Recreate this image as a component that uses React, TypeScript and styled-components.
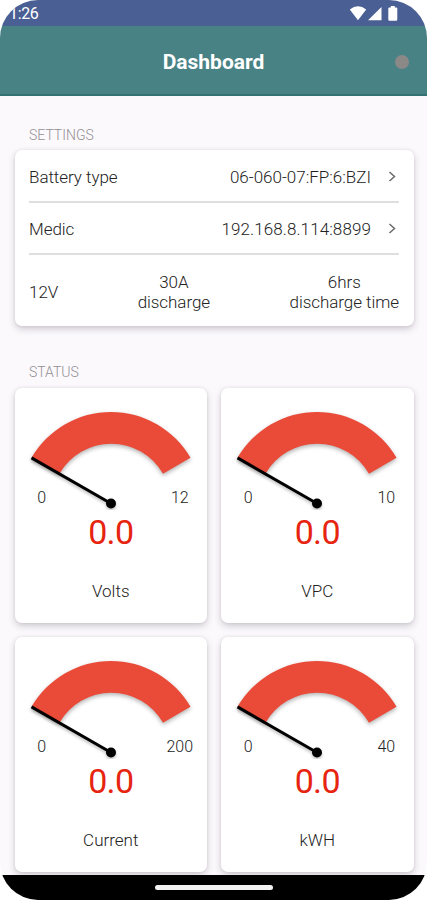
import React from "react";
import styled, { createGlobalStyle } from "styled-components";

const GlobalStyle = createGlobalStyle`
  * { box-sizing: border-box; }
  body { margin: 0; background: #fff; overflow: hidden; }
`;

const Screen = styled.div`
  width: 427px;
  height: 900px;
  display: flex;
  flex-direction: column;
  overflow: hidden;
  border-radius: 38px;
  background: #fcf9fd;
  color: #222;
  font: 300 17px/20px Roboto, sans-serif;
`;

const StatusBar = styled.div`
  height: 26px;
  flex: none;
  display: flex;
  justify-content: space-between;
  padding: 0 28px 0 9px;
  background: #4a5f93;
  color: #fff;
`;

const Clock = styled.time`
  margin-top: 4px;
  font-size: 16px;
  font-weight: 400;
  line-height: 20px;
  letter-spacing: -0.35px;
`;

const SystemIcons = styled.svg`
  width: 50px;
  height: 26px;
`;

const Header = styled.header`
  height: 70px;
  flex: none;
  display: grid;
  grid-template-columns: 1fr auto 1fr;
  align-items: center;
  padding: 3px 18px 0;
  background: #488284;
  border-bottom: 2px solid #327270;
`;

const Title = styled.h1`
  grid-column: 2;
  margin: 0;
  color: #fff;
  font-size: 21px;
  font-weight: 700;
  line-height: 26px;
  letter-spacing: 0;
`;

const ConnectionDot = styled.span`
  justify-self: end;
  width: 14px;
  height: 14px;
  border-radius: 50%;
  background: #8b8888;
`;

const Content = styled.main`
  flex: 1;
  min-height: 0;
  padding: 29px 13.5px 0 14.5px;
  overflow: hidden;
`;

const SectionLabel = styled.h2`
  margin: 0 0 5px 14.5px;
  color: #929094;
  font-size: 14px;
  font-weight: 300;
  line-height: 20px;
`;

const Card = styled.section`
  border-radius: 7px;
  background: #fff;
  box-shadow: 0 3px 7px rgba(40, 30, 45, 0.22), 0 0 3px rgba(40, 30, 45, 0.08);
`;

const SettingsCard = styled(Card)`
  height: 176px;
  margin-bottom: 36px;
  padding: 1px 14.5px 0;
`;

const SettingRow = styled.div`
  display: flex;
  align-items: center;
  height: 52px;
  padding-top: 2px;
  border-bottom: 2px solid #dfdfe0;
`;

const SettingName = styled.span`
  flex: 1;
  letter-spacing: -0.05px;
`;

const SettingValue = styled.span<{ $spacing?: number }>`
  letter-spacing: ${(p) => p.$spacing ?? 0}px;
`;

const Chevron = styled.svg`
  width: 12px;
  height: 14px;
  margin-left: 16px;
`;

const Summary = styled.div`
  height: 73px;
  display: flex;
  align-items: center;
  justify-content: space-between;
  padding-top: 1px;
  text-align: center;
  letter-spacing: -0.05px;
`;

const GaugeGrid = styled.div`
  display: grid;
  grid-template-columns: 192.5px 192.5px;
  grid-auto-rows: 235px;
  gap: 14px;
  padding-top: 1px;
`;

const GaugeCard = styled(Card)`
  display: flex;
  flex-direction: column;
  align-items: center;
`;

const Dial = styled.svg`
  width: 192px;
  height: 122px;
  flex: none;
`;

const Scale = styled.div`
  width: 192px;
  height: 20px;
  margin-top: -22px;
  display: flex;
  justify-content: space-between;
  font-size: 16px;
`;

const Limit = styled.span`
  width: 54px;
  text-align: center;
`;

const Reading = styled.strong`
  margin-top: 4px;
  color: #e6240f;
  font-size: 34px;
  font-weight: 400;
  line-height: 40px;
  letter-spacing: -0.7px;
`;

const GaugeName = styled.span`
  margin-top: 29px;
`;

const NavBar = styled.footer`
  height: 25px;
  flex: none;
  display: flex;
  justify-content: center;
  align-items: center;
  background: #000;
`;

const HomeHandle = styled.span`
  width: 118px;
  height: 5px;
  border-radius: 3px;
  background: #f2f2f2;
`;

const gauges = [
  { name: "Volts", max: 12 },
  { name: "VPC", max: 10 },
  { name: "Current", max: 200 },
  { name: "kWH", max: 40 },
];

function NextIcon() {
  return (
    <Chevron viewBox="0 0 12 14" fill="none" stroke="#6b6b6b" strokeWidth="1.5">
      <path d="M2.5 2 7.5 6.5l-5 4.5" />
    </Chevron>
  );
}

const DialArc = styled.path`
  fill: #ea4b39;
  filter: drop-shadow(0 2px 2px rgba(0, 0, 0, 0.3));
`;

const Needle = styled.g`
  filter: drop-shadow(0 2px 1.5px rgba(0, 0, 0, 0.25));
`;

function Gauge({ name, max }: { name: string; max: number }) {
  return (
    <GaugeCard>
      <Dial viewBox="0 0 192 122">
        <DialArc d="M16.5 69.7A92 92 0 0 1 175.5 69.7L148 85.8A59.5 59.5 0 0 0 44.5 85.8Z" />
        <Needle>
          <path d="M16.5 69.9 96 115.5" stroke="#000" strokeWidth="3" />
          <circle cx="96" cy="115.5" r="5" />
        </Needle>
      </Dial>
      <Scale>
        <Limit>0</Limit>
        <Limit>{max}</Limit>
      </Scale>
      <Reading>0.0</Reading>
      <GaugeName>{name}</GaugeName>
    </GaugeCard>
  );
}

export default function App() {
  return (
    <>
      <GlobalStyle />
      <Screen>
        <StatusBar>
          <Clock>1:26</Clock>
          <SystemIcons viewBox="0 0 50 26" fill="#fff">
            <path d="M.8 9.6Q9 2.8 17.2 9.6L9 20.3Z" />
            <path d="M32.5 7v13.3H19Z" />
            <path d="M41.8 6h4v1.5h1.5q1 0 1 1v11q0 1.3-1.2 1.3h-6.6q-1.2 0-1.2-1.3v-11q0-1 1-1h1.5Z" />
          </SystemIcons>
        </StatusBar>
        <Header>
          <Title>Dashboard</Title>
          <ConnectionDot />
        </Header>
        <Content>
          <SectionLabel>SETTINGS</SectionLabel>
          <SettingsCard>
            <SettingRow>
              <SettingName>Battery type</SettingName>
              <SettingValue>06-060-07:FP:6:BZI</SettingValue>
              <NextIcon />
            </SettingRow>
            <SettingRow>
              <SettingName>Medic</SettingName>
              <SettingValue $spacing={0.1}>192.168.8.114:8899</SettingValue>
              <NextIcon />
            </SettingRow>
            <Summary>
              <span>12V</span>
              <span>30A<br />discharge</span>
              <span>6hrs<br />discharge time</span>
            </Summary>
          </SettingsCard>
          <SectionLabel>STATUS</SectionLabel>
          <GaugeGrid>
            {gauges.map((g) => (
              <Gauge key={g.name} {...g} />
            ))}
          </GaugeGrid>
        </Content>
        <NavBar>
          <HomeHandle />
        </NavBar>
      </Screen>
    </>
  );
}
